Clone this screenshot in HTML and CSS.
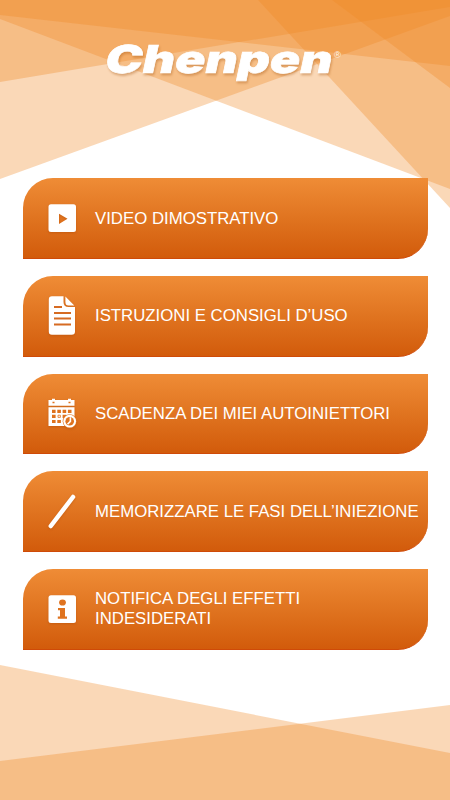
FILE: index.html
```
<!DOCTYPE html>
<html lang="it">
<head>
<meta charset="utf-8">
<title>Chenpen</title>
<link rel="stylesheet" href="styles.css">
</head>
<body>
<div class="screen">
  <svg class="backdrop" viewBox="0 0 450 800" aria-hidden="true">
    <path d="M0 179L450 16V0H0Z"/>
    <path d="M0 19L450 189V0H0Z"/>
    <path d="M0 82L450 7V0H0Z"/>
    <path d="M0 15L450 66V0H0Z"/>
    <path d="M258 0L450 208V0Z"/>
    <path d="M332 0L450 88V0Z"/>
    <path d="M0 665L450 753V800H0Z"/>
    <path d="M0 761L450 705V800H0Z"/>
  </svg>
  <header class="header">
    <svg class="logo" viewBox="0 0 250 60" role="img" aria-label="Chenpen">
      <g class="shadow"><text class="wordmark" transform="translate(3.300 38.200) skewX(-12)" textLength="227" lengthAdjust="spacingAndGlyphs">Chenpen</text></g>
      <text class="registered" x="234" y="22.500">®</text>
    </svg>
  </header>
  <nav class="menu">
    <a class="item"><svg class="icon" viewBox="0 0 30 44"><path class="solid" fill-rule="evenodd" d="M4 8.200H26.500Q29 8.200 29 10.700V33.500Q29 36 26.500 36H4Q1.500 36 1.500 33.500V10.700Q1.500 8.200 4 8.200ZM12 17.700V28L20.500 22.800Z"/></svg><span class="label">VIDEO DIMOSTRATIVO</span></a>
    <a class="item"><svg class="icon" viewBox="0 0 30 44"><path class="solid" d="M5 2.200H16.500V8Q16.500 13 21.500 13H28V37.500Q28 40.800 24.700 40.800H5Q1.800 40.800 1.800 37.500V5.500Q1.800 2.200 5 2.200ZM18.400 2.600L27.300 11.500H21.500Q18.400 11.500 18.400 8Z"/><path class="rule" d="M7 13H15M7 19H24M7 24.500H24M7 30.500H24"/></svg><span class="label">ISTRUZIONI E CONSIGLI D’USO</span></a>
    <a class="item"><svg class="icon" viewBox="0 0 30 44"><g transform="translate(0 .7)"><path class="solid" d="M1.500 8.300H5V7H8V8.300H21V7H24V8.300H27.500V14H1.500ZM1.500 15.500H27.500V34.200H1.500Z"/><path class="cut" d="M5 18h3.600v3.200H5zM10.300 18h3.600v3.200h-3.600zM15.600 18h3.600v3.200h-3.600zM20.900 18h3.600v3.200h-3.600zM5 23h3.600v3.200H5zM15.600 23h3.600v3.200h-3.600zM5 28.200h3.600v3.200H5zM10.300 28.200h3.600v3.200h-3.600zM5.500 10h2v1.500h-2zM21.500 10h2v1.500h-2z"/><path class="thin" d="M11 23.500h2.400v2.200H11z"/><circle class="cut" cx="22.700" cy="29.500" r="7"/><circle class="solid" cx="22.700" cy="29.500" r="6.400"/><circle class="cut" cx="22.700" cy="29.500" r="4.300"/><path class="hands" d="M23.400 25.500V29.600L20.500 32.500"/></g></svg><span class="label">SCADENZA DEI MIEI AUTOINIETTORI</span></a>
    <a class="item"><svg class="icon" viewBox="0 0 30 44"><path class="pen" d="M3.800 37L26 8"/></svg><span class="label">MEMORIZZARE LE FASI DELL’INIEZIONE</span></a>
    <a class="item"><svg class="icon" viewBox="0 0 30 44"><rect class="solid" x="1.500" y="8.200" width="27.500" height="27.800" rx="2.500"/><path class="cut" d="M11 21H18V29.500H20V31.800H10.800V29.500H13V23.200H11Z"/><ellipse class="cut" cx="15.500" cy="15.500" rx="3.400" ry="3.100"/></svg><span class="label">NOTIFICA DEGLI EFFETTI<br>INDESIDERATI</span></a>
  </nav>
</div>
</body>
</html>
```
FILE: styles.css
```
* { box-sizing: border-box; }
body { margin: 0; background: #fff; font-family: "Liberation Sans", Arial, sans-serif; }
.screen { position: relative; width: 450px; height: 800px; overflow: hidden; }
.backdrop { position: absolute; inset: 0; width: 450px; height: 800px; fill: rgb(241, 138, 36); fill-opacity: .33; }
.header { position: relative; height: 178.200px; padding: 35px 0 0 100px; }
.logo { display: block; width: 250px; height: 60px; overflow: visible; }
.shadow { filter: drop-shadow(1px 2px 1px rgba(170, 90, 20, .4)); }
.wordmark { font: 900 38.500px Inter, "Liberation Sans", sans-serif; fill: #fff; stroke: #fff; stroke-width: .6px; }
.registered { font-size: 9.500px; fill: #fff; fill-opacity: .9; }
.menu { position: relative; display: flex; flex-direction: column; gap: 17px; padding: 0 22px 0 23px; }
.item { display: flex; align-items: center; height: 80.700px; padding-left: 24px; border-radius: 30px 0 30px 0; border-bottom: 1px solid #cf4a08; background: linear-gradient(#ef8c36, #e07420 50%, #d25b0b); color: #fff; }
.icon { flex: none; width: 30px; height: 44px; margin-right: 18px; filter: drop-shadow(0 1px 1px rgba(160, 65, 0, .35)); }
.label { padding-top: 1px; font-size: 16.800px; line-height: 20px; white-space: nowrap; }
.solid { fill: #fff; }
.cut { fill: #df731f; }
.rule { fill: none; stroke: #d66b22; stroke-width: 1.800; }
.thin { fill: none; stroke: #df731f; stroke-width: .8; }
.hands { fill: none; stroke: #fff; stroke-width: 1.600; }
.pen { fill: none; stroke: #fff; stroke-width: 4.500; stroke-linecap: round; }
```
